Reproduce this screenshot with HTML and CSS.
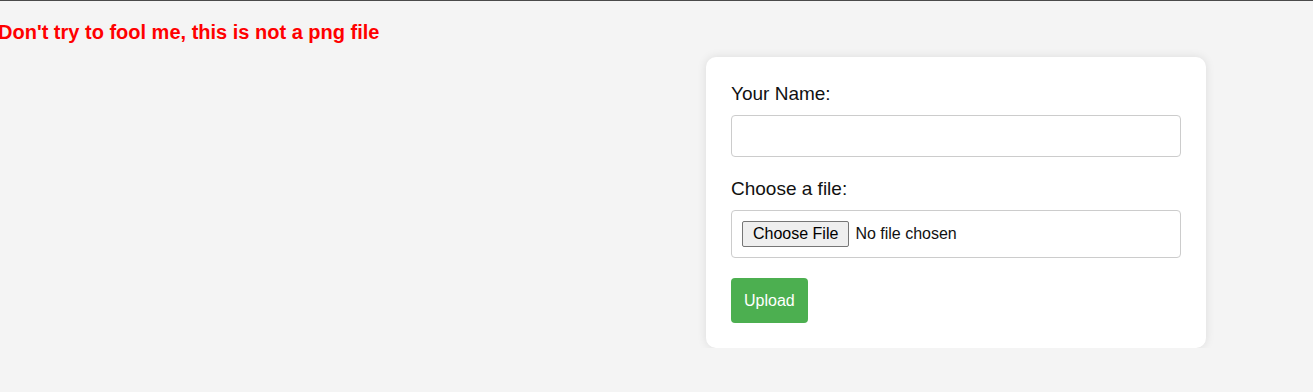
FILE: index.html
```html
<!DOCTYPE html>
<html lang="en">
<head>
    <meta charset="UTF-8">
    <meta name="viewport" content="width=device-width, initial-scale=1.0">
    <title>Upload</title>
    <link rel="stylesheet" href="styles.css">
</head>
<body>
    <div class="page">
        <p class="error">Don't try to fool me, this is not a png file</p>

        <form class="upload-form" action="#" method="post" enctype="multipart/form-data">
            <label for="name">Your Name:</label>
            <input type="text" id="name" name="name">

            <label for="file">Choose a file:</label>
            <input type="file" id="file" name="file">

            <button type="submit">Upload</button>
        </form>
    </div>
</body>
</html>
```

FILE: styles.css
```css
* {
    box-sizing: border-box;
}

body {
    margin: 0;
    background-color: #f4f4f4;
    border-top: 1px solid #4a4a4a;
    font-family: "Liberation Sans", Arial, sans-serif;
    color: #111;
}

.page {
    display: flex;
    align-items: flex-start;
}

.error {
    flex: 0 0 708px;
    margin: 20px 0 0 -2px;
    color: #ff0000;
    font-size: 20px;
    font-weight: bold;
}

.upload-form {
    width: 500px;
    margin-top: 56px;
    padding: 25px;
    background-color: #fff;
    border-radius: 10px;
    box-shadow: 0 0 10px rgba(0, 0, 0, 0.1);
}

.upload-form label {
    display: block;
    margin-bottom: 10px;
    font-size: 19px;
    line-height: 23px;
}

.upload-form input {
    display: block;
    width: 100%;
    margin-bottom: 20px;
    padding: 10px;
    border: 1px solid #ccc;
    border-radius: 4px;
    font-size: 16px;
    font-family: inherit;
}

.upload-form input[type="text"] {
    height: 42px;
}

.upload-form input[type="file"] {
    height: 48px;
}

.upload-form input[type="file"]::file-selector-button {
    height: 26px;
    margin-right: 6px;
    padding: 0 10px;
    font-size: 16px;
    font-family: inherit;
    background-color: #efefef;
    border: 1px solid #767676;
    border-radius: 2px;
}

.upload-form button {
    height: 45px;
    padding: 0 13px;
    background-color: #4caf50;
    color: #fff;
    border: none;
    border-radius: 4px;
    font-size: 16px;
    font-family: inherit;
    cursor: pointer;
}
```
